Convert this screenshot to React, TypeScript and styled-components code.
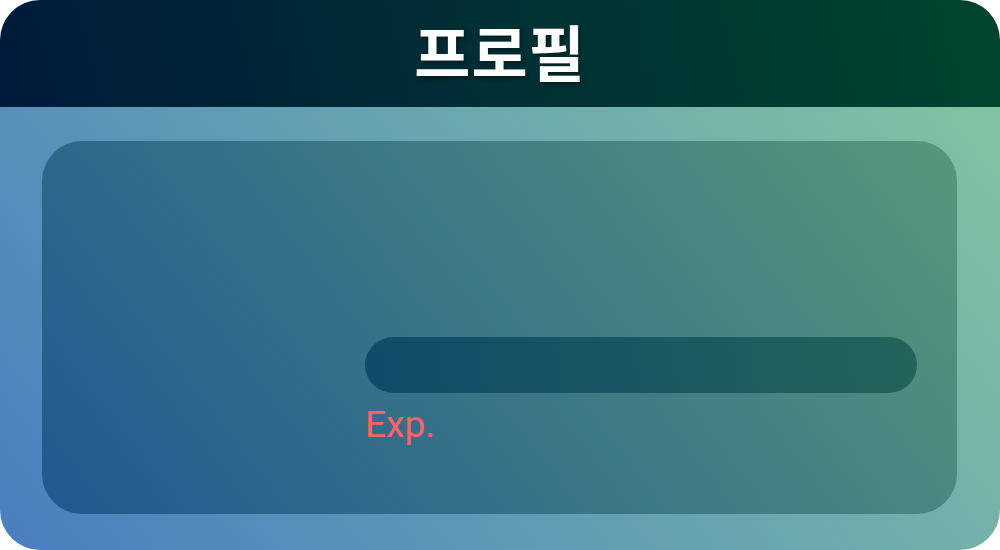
import React from 'react'
import styled, { createGlobalStyle } from 'styled-components'

const GlobalStyle = createGlobalStyle`
    html, body {
        margin: 0;
        padding: 0;
        background: #ffffff;
    }
`;

const App: React.FC = () => {
    return (
        <>
            <GlobalStyle />
            <Card>
                <Header>
                    <Title>프로필</Title>
                </Header>
                <Body>
                    <Panel>
                        <Side />
                        <Info>
                            <ExpBar />
                            <ExpLabel>Exp.</ExpLabel>
                        </Info>
                    </Panel>
                </Body>
            </Card>
        </>
    )
}

const Card = styled.div`
    width: 1000px;
    height: 550px;
    border-radius: 40px;
    overflow: hidden;
    display: flex;
    flex-direction: column;
`;

const Header = styled.header`
    height: 107px;
    flex-shrink: 0;
    display: flex;
    align-items: center;
    justify-content: center;
    background: linear-gradient(75deg, #001a3b, #00452d);
`;

const Title = styled.h1`
    margin: 0;
    color: #ffffff;
    font-family: "Noto Sans CJK KR", "Noto Sans", sans-serif;
    font-weight: 700;
    font-size: 61px;
    line-height: 1;
    letter-spacing: 1px;
    text-shadow: 2px 3px 4px rgba(0, 0, 0, 0.35);
    transform: translateY(-3px);
`;

const Body = styled.main`
    flex: 1;
    display: flex;
    padding: 34px 43px 36px 42px;
    background: linear-gradient(52deg, #4a7ec0, #82c3a2);
`;

const Panel = styled.section`
    flex: 1;
    display: grid;
    grid-template-columns: 323px 1fr;
    padding-right: 40px;
    border-radius: 40px;
    background: linear-gradient(52deg, #225891, #58977b);
`;

const Side = styled.div``;

const Info = styled.div`
    padding-top: 196px;
    display: flex;
    flex-direction: column;
`;

const ExpBar = styled.div`
    height: 56px;
    border-radius: 28px;
    background: linear-gradient(80deg, #114a6a, #25645a);
`;

const ExpLabel = styled.span`
    margin-top: 10px;
    color: #ff6262;
    font-family: Roboto, "Noto Sans", sans-serif;
    font-size: 37px;
    font-weight: 400;
    line-height: 43px;
`;

export default App
